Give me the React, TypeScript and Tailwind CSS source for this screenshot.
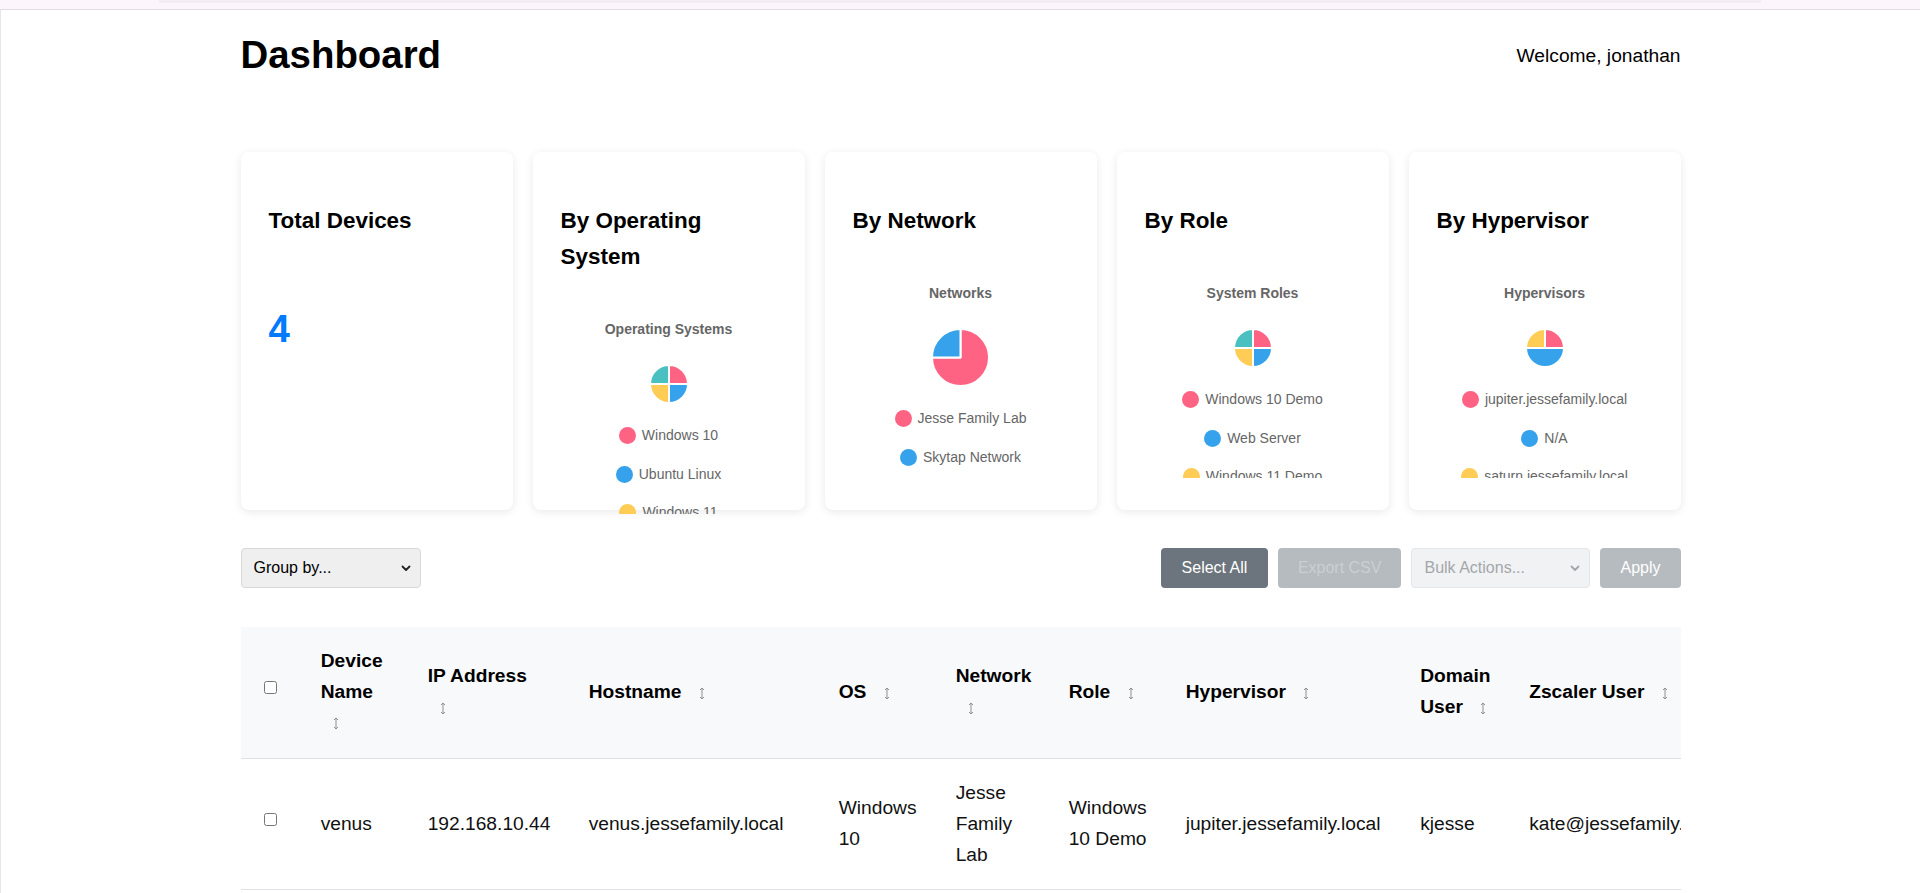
import React from "react";

const PINK = "#ff6384";
const BLUE = "#36a2eb";
const YELLOW = "#ffcd56";
const TEAL = "#4bc0c0";

type Item = { label: string; color: string; value: number };

function Pie({ items, size }: { items: Item[]; size: number }) {
  const r = size / 2;
  const c = size / 2;
  const total = items.reduce((s, i) => s + i.value, 0);
  let angle = -90;
  const paths = items.map((it, idx) => {
    const a0 = angle;
    const a1 = angle + (it.value / total) * 360;
    angle = a1;
    const rad0 = (a0 * Math.PI) / 180;
    const rad1 = (a1 * Math.PI) / 180;
    const x0 = c + r * Math.cos(rad0);
    const y0 = c + r * Math.sin(rad0);
    const x1 = c + r * Math.cos(rad1);
    const y1 = c + r * Math.sin(rad1);
    const large = a1 - a0 > 180 ? 1 : 0;
    const d = `M ${c} ${c} L ${x0} ${y0} A ${r} ${r} 0 ${large} 1 ${x1} ${y1} Z`;
    return <path key={idx} d={d} fill={it.color} stroke="#fff" strokeWidth={2} strokeLinejoin="round" />;
  });
  return (
    <svg width={size + 2} height={size + 2} viewBox={`-1 -1 ${size + 2} ${size + 2}`}>
      {paths}
    </svg>
  );
}

function ChartCard({
  title,
  chartTitle,
  items,
  pieSize,
}: {
  title: string;
  chartTitle: string;
  items: Item[];
  pieSize: number;
}) {
  return (
    <div className="h-[358px] rounded-lg bg-white shadow-[0_2px_10px_rgba(0,0,0,0.09)] px-[28px] pt-[28px]">
      <h3 className="mt-[22.46px] mb-[22.46px] text-[22.46px] leading-[35.94px] font-bold text-black">{title}</h3>
      <div className="h-[217px] overflow-hidden flex flex-col items-center">
        <div className="mt-[24.5px] h-[17px] text-[14px] leading-[17px] font-bold text-[#666]">{chartTitle}</div>
        <div className="mt-[26px]">
          <Pie items={items} size={pieSize} />
        </div>
        <div className="mt-[12px] flex flex-col items-center">
          {items.map((it) => (
            <div key={it.label} className="h-[38.5px] flex items-center gap-[6px] text-[14px] leading-[17px] text-[#666]">
              <span className="inline-block w-[17px] h-[17px] rounded-full" style={{ backgroundColor: it.color }} />
              <span>{it.label}</span>
            </div>
          ))}
        </div>
      </div>
    </div>
  );
}

function Sort() {
  return (
    <span className="inline-block w-[14px] ml-2 text-center align-middle">
      <svg width="6" height="13" viewBox="0 0 6 13" className="inline-block align-middle">
        <line x1="3" y1="1" x2="3" y2="12" stroke="#8f8f8f" strokeWidth="1" />
        <polyline points="1,3 3,1 5,3" fill="none" stroke="#8f8f8f" strokeWidth="1" />
        <polyline points="1,10 3,12 5,10" fill="none" stroke="#8f8f8f" strokeWidth="1" />
      </svg>
    </span>
  );
}

function Chevron({ color }: { color: string }) {
  return (
    <svg width="10" height="7" viewBox="0 0 10 7" className="shrink-0">
      <polyline points="1.5,1.5 5,5 8.5,1.5" fill="none" stroke={color} strokeWidth="1.8" strokeLinecap="round" strokeLinejoin="round" />
    </svg>
  );
}

const rows = [
  ["venus", "192.168.10.44", "venus.jessefamily.local", "Windows 10", "Jesse Family Lab", "Windows 10 Demo", "jupiter.jessefamily.local", "kjesse", "kate@jessefamily.local"],
  ["mars", "192.168.10.45", "mars.jessefamily.local", "Ubuntu Linux", "Skytap Network", "Web Server", "N/A", "jjesse", "jon@jessefamily.local"],
  ["earth", "192.168.10.46", "earth.jessefamily.local", "Windows 11", "Jesse Family Lab", "Windows 11 Demo", "saturn.jessefamily.local", "kjesse", "kate@jessefamily.local"],
  ["pluto", "192.168.10.47", "pluto.jessefamily.local", "Windows Server", "Jesse Family Lab", "Domain Controller", "N/A", "admin", "admin@jessefamily.local"],
];

export default function App() {
  return (
    <div className="min-h-screen bg-white font-['Liberation_Sans',Arial,Helvetica,sans-serif] text-[19.2px] leading-[1.6] text-[#111]">
      <div className="h-[10px] bg-[#fcf6fc] border-b border-[#e3dbe4] px-[159px]">
        <div className="h-[1px] bg-[#f6eff6] shadow-[0_1px_2px_rgba(0,0,0,0.12)]" />
      </div>
      <div className="border-l border-[#e6e6e6] min-h-[883px]">
        <div className="max-w-[1440px] mx-auto">
          <div className="flex justify-between items-center pt-[13.7px]">
            <h1 className="text-[38.4px] leading-[61.44px] font-bold text-black">Dashboard</h1>
            <div className="pt-[4px] text-black">Welcome, jonathan</div>
          </div>

          <div className="grid grid-cols-5 gap-5 mt-[67px]">
            <div className="h-[358px] rounded-lg bg-white shadow-[0_2px_10px_rgba(0,0,0,0.09)] px-[28px] pt-[28px]">
              <h3 className="mt-[22.46px] mb-[22.46px] text-[22.46px] leading-[35.94px] font-bold text-black">Total Devices</h3>
              <div className="mt-[59px] text-[38.4px] leading-[61.44px] font-bold text-[#007bff]">4</div>
            </div>
            <ChartCard
              title="By Operating System"
              chartTitle="Operating Systems"
              pieSize={38}
              items={[
                { label: "Windows 10", color: PINK, value: 1 },
                { label: "Ubuntu Linux", color: BLUE, value: 1 },
                { label: "Windows 11", color: YELLOW, value: 1 },
                { label: "Windows Server", color: TEAL, value: 1 },
              ]}
            />
            <ChartCard
              title="By Network"
              chartTitle="Networks"
              pieSize={57}
              items={[
                { label: "Jesse Family Lab", color: PINK, value: 3 },
                { label: "Skytap Network", color: BLUE, value: 1 },
              ]}
            />
            <ChartCard
              title="By Role"
              chartTitle="System Roles"
              pieSize={38}
              items={[
                { label: "Windows 10 Demo", color: PINK, value: 1 },
                { label: "Web Server", color: BLUE, value: 1 },
                { label: "Windows 11 Demo", color: YELLOW, value: 1 },
                { label: "Domain Controller", color: TEAL, value: 1 },
              ]}
            />
            <ChartCard
              title="By Hypervisor"
              chartTitle="Hypervisors"
              pieSize={38}
              items={[
                { label: "jupiter.jessefamily.local", color: PINK, value: 1 },
                { label: "N/A", color: BLUE, value: 2 },
                { label: "saturn.jessefamily.local", color: YELLOW, value: 1 },
              ]}
            />
          </div>

          <div className="mt-[38px] flex justify-between items-center">
            <div className="w-[180px] h-[40px] flex items-center justify-between pl-[12px] pr-[9px] bg-[#efefef] border border-[#d9d9d9] rounded-[4px] text-[16px] leading-[24px] text-black">
              <span>Group by...</span>
              <Chevron color="#222" />
            </div>
            <div className="flex items-center gap-[10px] text-[16px] leading-[24px]">
              <button className="h-[40px] px-[20.5px] rounded-[4px] bg-[#6c757d] text-white">Select All</button>
              <button className="h-[40px] px-5 rounded-[4px] bg-[#b6bbbf] text-[#cbcfd2]">Export CSV</button>
              <div className="w-[179px] h-[40px] flex items-center justify-between pl-[12px] pr-[9px] bg-[#f1f2f4] border border-[#e3e5e8] rounded-[4px] text-[#a3a7ab]">
                <span>Bulk Actions...</span>
                <Chevron color="#a3a7ab" />
              </div>
              <button className="h-[40px] px-5 rounded-[4px] bg-[#b6bbbf] text-white">Apply</button>
            </div>
          </div>

          <div className="mt-[38.7px] overflow-hidden">
            <table className="table-fixed border-collapse w-[1504px]">
              <colgroup>
                <col className="w-[61px]" />
                <col className="w-[107px]" />
                <col className="w-[161px]" />
                <col className="w-[250px]" />
                <col className="w-[117px]" />
                <col className="w-[113px]" />
                <col className="w-[117px]" />
                <col className="w-[234.5px]" />
                <col className="w-[109px]" />
                <col className="w-[234.5px]" />
              </colgroup>
              <thead>
                <tr className="bg-[#f8f9fa] border-b border-[#dee2e6]">
                  <th className="px-[19.2px] py-[19.2px] text-left align-middle">
                    <input type="checkbox" className="block ml-[4px] -mt-[10px] w-[13px] h-[13px]" />
                  </th>
                  {["Device Name", "IP Address", "Hostname", "OS", "Network", "Role", "Hypervisor", "Domain User", "Zscaler User"].map((h) => (
                    <th key={h} className="px-[19.2px] py-[19.2px] text-left align-middle font-bold text-black">
                      {h} <Sort />
                    </th>
                  ))}
                </tr>
              </thead>
              <tbody>
                {rows.map((r) => (
                  <tr key={r[0]} className="border-b border-[#dee2e6]">
                    <td className="px-[19.2px] py-[19.2px] align-middle">
                      <input type="checkbox" className="block ml-[4px] -mt-[10px] w-[13px] h-[13px]" />
                    </td>
                    {r.map((c, i) => (
                      <td key={i} className="px-[19.2px] py-[19.2px] align-middle whitespace-normal">
                        {c}
                      </td>
                    ))}
                  </tr>
                ))}
              </tbody>
            </table>
          </div>
        </div>
      </div>
    </div>
  );
}
